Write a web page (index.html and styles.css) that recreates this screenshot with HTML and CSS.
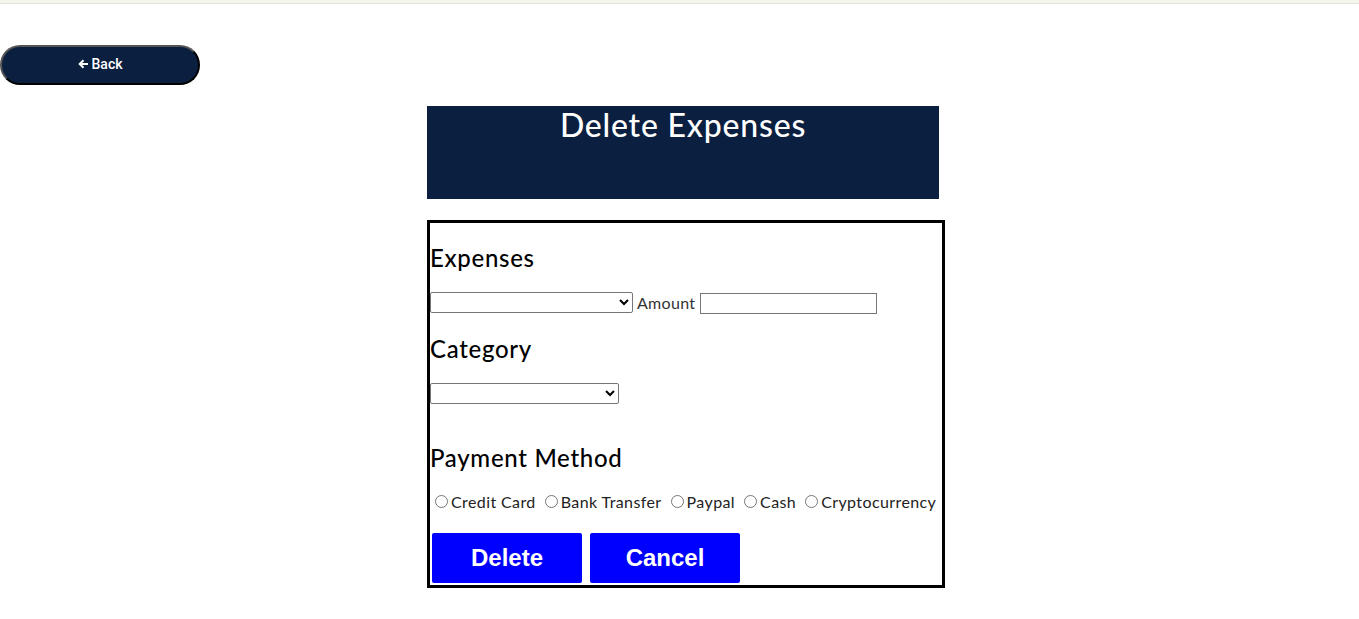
FILE: index.html
```html
<!DOCTYPE html>
<html lang="en">
<head>
<meta charset="utf-8">
<title>Delete Expenses</title>
<link rel="stylesheet" href="styles.css">
</head>
<body>
<div class="topstrip"></div>
<div class="backbar">
  <button class="back-btn" type="button">
    <svg class="back-icon" width="11" height="10" viewBox="0 0 11 10" aria-hidden="true"><path d="M10 5H2M5.5 1.2L1.7 5l3.8 3.8" fill="none" stroke="#fff" stroke-width="2"/></svg>
    <span>Back</span>
  </button>
</div>
<div class="page">
  <div class="column">
    <div class="header"><h1 class="title">Delete Expenses</h1></div>
    <form class="panel">
      <h3 class="label label-first">Expenses</h3>
      <div class="row">
        <select class="sel sel-expense"><option></option></select>
        <span class="txt">Amount</span>
        <input class="amount" type="text">
      </div>
      <h3 class="label">Category</h3>
      <div class="row">
        <select class="sel sel-category"><option></option></select>
      </div>
      <h3 class="label label-pay">Payment Method</h3>
      <div class="radios">
        <label class="radio"><input type="radio" name="pm">Credit Card</label>
        <label class="radio"><input type="radio" name="pm">Bank Transfer</label>
        <label class="radio"><input type="radio" name="pm">Paypal</label>
        <label class="radio"><input type="radio" name="pm">Cash</label>
        <label class="radio"><input type="radio" name="pm">Cryptocurrency</label>
      </div>
      <div class="actions">
        <button class="action" type="button">Delete</button>
        <button class="action" type="button">Cancel</button>
      </div>
    </form>
  </div>
</div>
</body>
</html>
```
FILE: styles.css
```css
* { box-sizing: border-box; }
html, body { margin: 0; padding: 0; background: #fff; }
body { font-family: "Lato", "Noto Sans", sans-serif; color: #000; }

.topstrip {
  height: 4px;
  background: #f5f5eb;
  border-bottom: 1px solid #e4e4d6;
}

.backbar { padding-top: 41px; }
.back-btn {
  width: 200px;
  height: 40px;
  border-radius: 20px;
  background: #0b2040;
  border: 2px solid #000;
  border-color: #555 #000 #000 #555;
  color: #fff;
  font-family: "Roboto", "Liberation Sans", sans-serif;
  font-size: 14px;
  font-weight: 500;
  display: flex;
  align-items: center;
  justify-content: center;
  gap: 3px;
  padding: 0 0 2px 0;
  margin: 0;
}
.back-icon { display: block; }

.page {
  display: flex;
  justify-content: center;
  padding-left: 13px;
  padding-top: 21px;
}
.column { width: 518px; }

.header {
  width: 512px;
  height: 93px;
  background: #0b2040;
  text-align: center;
}
.title {
  margin: 0;
  padding-top: 0;
  color: #fff;
  font-size: 32px;
  font-weight: 500;
  line-height: 38px;
  letter-spacing: 0.8px;
}

.panel {
  margin-top: 21px;
  border: 3px solid #000;
  padding: 0 0 2px 0;
}

.label {
  margin: 22px 0 0 0;
  font-size: 24px;
  font-weight: 500;
  line-height: 28px;
  letter-spacing: 0.7px;
}
.label-first { margin-top: 21px; }
.label-pay { margin-top: 40px; }

.row {
  display: flex;
  align-items: center;
  gap: 4px;
  margin-top: 20px;
  height: 21px;
}
.sel {
  height: 21px;
  margin: 0;
  border: 1px solid #767676;
  border-radius: 2px;
  background: #fff;
  font-size: 13px;
}
.sel-expense { width: 203px; }
.sel-category { width: 189px; }
.txt { font-size: 16px; color: #333; letter-spacing: 0.3px; }
.amount {
  width: 177px;
  height: 21px;
  margin: 1px 0 0 1px;
  border: 1px solid #767676;
  padding: 0;
}

.radios {
  display: flex;
  align-items: center;
  margin-top: 20px;
  padding-left: 5px;
  height: 18px;
  font-size: 16px;
  color: #222;
  letter-spacing: 0.4px;
}
.radio {
  display: flex;
  align-items: center;
  margin-right: 9px;
}
.radio:last-child { margin-right: 0; }
.radio input {
  width: 13px;
  height: 13px;
  margin: 0 3px 0 0;
}

.actions {
  display: flex;
  gap: 8px;
  margin-top: 23px;
  padding-left: 2px;
}
.action {
  width: 150px;
  height: 50px;
  background: #0000ff;
  border: none;
  border-radius: 2px;
  color: #fff;
  font-family: "Liberation Sans", Arial, sans-serif;
  font-weight: bold;
  font-size: 24px;
  padding: 0;
  margin: 0;
}
```
